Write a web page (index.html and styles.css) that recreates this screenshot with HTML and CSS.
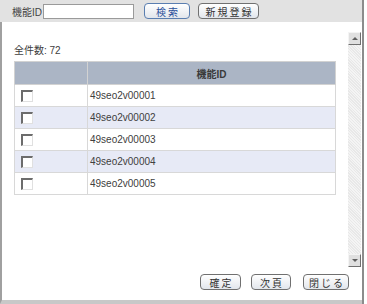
FILE: index.html
```html
<!DOCTYPE html>
<html>
<head>
    <link rel="stylesheet" href="styles.css">
</head>
<body>
<div class="window">
    <div class="toolbar">
        <span class="label">機能ID</span>
        <input type="text" class="search-input">
        <a href="#" class="btn btn-blue search-btn">検索</a>
        <a href="#" class="btn new-btn">新規登録</a>
    </div>
    <div class="frame">
        <div class="scroll-area">
            <div class="list-pane">
                <div class="count">全件数: 72</div>
                <table class="list">
                    <tr>
                        <th class="col-check"></th>
                        <th>機能ID</th>
                    </tr>
                    <tr><td class="col-check"><span class="check"></span></td><td>49seo2v00001</td></tr>
                    <tr class="alt"><td class="col-check"><span class="check"></span></td><td>49seo2v00002</td></tr>
                    <tr><td class="col-check"><span class="check"></span></td><td>49seo2v00003</td></tr>
                    <tr class="alt"><td class="col-check"><span class="check"></span></td><td>49seo2v00004</td></tr>
                    <tr><td class="col-check"><span class="check"></span></td><td>49seo2v00005</td></tr>
                </table>
            </div>
            <div class="scrollbar">
                <div class="arrow up"></div>
                <div class="track"></div>
                <div class="arrow down"></div>
            </div>
        </div>
        <div class="footer">
            <a href="#" class="btn ok-btn">確定</a>
            <a href="#" class="btn next-btn">次頁</a>
            <a href="#" class="btn close-btn">閉じる</a>
        </div>
    </div>
</div>
</body>
</html>
```

FILE: styles.css
```css
body, html {
margin: 0;
padding: 0;
background-color: #ffffff;
}

body {
width: 367px;
height: 304px;
overflow: hidden;
font-family: "Liberation Sans", "Noto Sans CJK JP", sans-serif;
font-size: 10px;
color: #404040;
}

.window {
width: 362px;
height: 304px;
border-right: 2px solid #8c8c8c;
display: flex;
flex-direction: column;
}

.toolbar {
height: 22px;
background-color: #e2e2e2;
display: flex;
align-items: center;
padding-left: 12px;
box-sizing: border-box;
}

.label {
font-size: 10px;
color: #444444;
}

.search-input {
width: 91px;
height: 15px;
margin: 0 0 0 1px;
padding: 0;
border: 1px solid #9a9a9a;
box-sizing: border-box;
background-color: #ffffff;
}

.btn {
display: inline-flex;
align-items: center;
justify-content: center;
height: 16px;
padding: 0;
box-sizing: border-box;
border: 1px solid #707070;
border-radius: 4px;
background: linear-gradient(#ffffff, #e2e6ec);
color: #333333;
font-size: 10px;
text-decoration: none;
letter-spacing: 2px;
text-indent: 2px;
white-space: nowrap;
}

.btn-blue {
border-color: #5a7eb0;
color: #2a4f9a;
}

.search-btn {
margin-left: 10px;
width: 46px;
}

.new-btn {
margin-left: 8px;
width: 61px;
}

.frame {
flex: 1;
border-left: 2px solid #a0a0a0;
border-bottom: 4px solid #c8c8c8;
display: flex;
flex-direction: column;
}

.scroll-area {
display: flex;
height: 245px;
}

.list-pane {
flex: 1;
padding: 20px 0 0 12px;
}

.count {
font-size: 10px;
height: 19px;
}

.list {
width: 322px;
border-collapse: collapse;
border: 1px solid #d2d2d2;
}

.list th {
height: 22px;
background-color: #abb5c5;
color: #3a3a3a;
font-weight: bold;
font-size: 10px;
border: 1px solid #d2d2d2;
border-top: none;
padding: 0;
}

.list td {
height: 21px;
padding: 0 0 0 2px;
border: 1px solid #d8d8d8;
font-size: 10px;
}

.list tr.alt td {
background-color: #e7eaf6;
}

.list .col-check {
width: 66px;
padding-left: 6px;
}

.check {
display: block;
width: 9px;
height: 9px;
border-top: 2px solid #6c6c6c;
border-left: 2px solid #6c6c6c;
border-right: 1px solid #e0e0e0;
border-bottom: 1px solid #e0e0e0;
background-color: #ffffff;
}

.scrollbar {
width: 13px;
margin-top: 10px;
margin-right: 1px;
display: flex;
flex-direction: column;
}

.arrow {
height: 13px;
background-color: #e0e0e0;
border: 1px solid;
border-color: #f4f4f4 #707070 #707070 #f4f4f4;
box-sizing: border-box;
position: relative;
}

.arrow::after {
content: "";
position: absolute;
left: 3px;
width: 0;
height: 0;
border-left: 3px solid transparent;
border-right: 3px solid transparent;
}

.arrow.up::after {
top: 4px;
border-bottom: 3px solid #606060;
}

.arrow.down::after {
top: 4px;
border-top: 3px solid #606060;
}

.track {
flex: 1;
background-color: #f0f0f0;
background-image: repeating-linear-gradient(45deg, #f4f4f4 0 1px, #e8e8e8 1px 2px);
}

.footer {
flex: 1;
display: flex;
justify-content: flex-end;
align-items: flex-start;
padding: 7px 13px 0 0;
}

.ok-btn {
width: 41px;
}

.next-btn {
width: 40px;
margin-left: 10px;
}

.close-btn {
width: 46px;
margin-left: 12px;
}
```
